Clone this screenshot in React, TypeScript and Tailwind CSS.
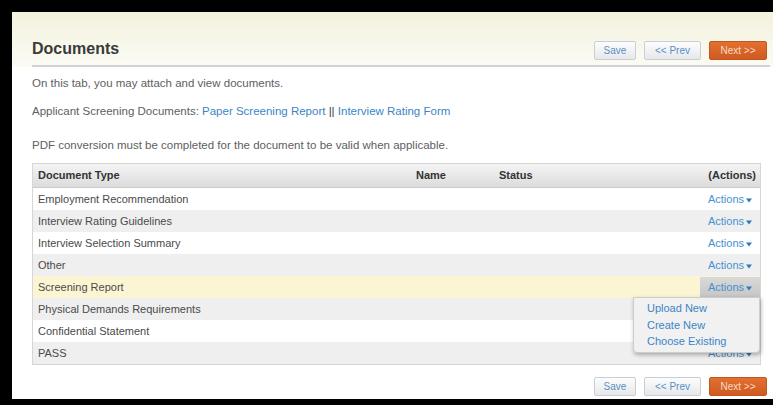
import React from "react";

const rows = [
  { name: "Employment Recommendation", tone: "white" },
  { name: "Interview Rating Guidelines", tone: "gray" },
  { name: "Interview Selection Summary", tone: "white" },
  { name: "Other", tone: "gray" },
  { name: "Screening Report", tone: "hover" },
  { name: "Physical Demands Requirements", tone: "gray" },
  { name: "Confidential Statement", tone: "white" },
  { name: "PASS", tone: "gray" },
];

function Caret() {
  return (
    <svg width="6" height="5" viewBox="0 0 6 5" className="ml-[2px] mt-[2px]">
      <path d="M0 0.5 L6 0.5 L3 4.5 Z" fill="#2f78bd" />
    </svg>
  );
}

function NavButtons() {
  return (
    <div className="flex items-center gap-[8px]">
      <button className="h-[19px] w-[42px] rounded-[2px] border border-[#c9ced4] bg-gradient-to-b from-[#fdfdfd] to-[#e6e8ea] text-[10px] text-[#5a8fc6] leading-none">
        Save
      </button>
      <button className="h-[19px] w-[57px] rounded-[2px] border border-[#c9ced4] bg-gradient-to-b from-[#fdfdfd] to-[#e6e8ea] text-[10px] text-[#5a8fc6] leading-none">
        &lt;&lt; Prev
      </button>
      <button className="h-[19px] w-[58px] rounded-[2px] border border-[#c2551f] bg-gradient-to-b from-[#e2702f] to-[#cf5a22] text-[10px] text-[#fbd9c2] leading-none">
        Next &gt;&gt;
      </button>
    </div>
  );
}

export default function App() {
  return (
    <div
      className="w-[773px] h-[405px] bg-black pt-[12px] pl-[12px] pb-[6px] overflow-hidden"
      style={{ fontFamily: '"Liberation Sans", Arial, sans-serif' }}
    >
      <div className="h-full bg-white flex flex-col">
        {/* page header */}
        <div className="bg-gradient-to-b from-[#f3f2dd] to-[#fbfbf5] pl-[20px] pr-[3px]">
          <div className="h-[55px] flex items-end justify-between border-b-2 border-[#d2d2d2] pb-[5px] pr-[3px]">
            <h1 className="text-[16px] leading-[18px] font-bold text-[#3a3a3a] mb-[2px]">Documents</h1>
            <NavButtons />
          </div>
        </div>

        <div className="pl-[20px] pr-[12px] flex flex-col">
          <p className="mt-[8px] text-[11.5px] leading-[16px] text-[#606060]">
            On this tab, you may attach and view documents.
          </p>
          <p className="mt-[12px] text-[11.5px] leading-[16px] text-[#606060]">
            Applicant Screening Documents:{" "}
            <a className="text-[#3b85c7]">Paper Screening Report</a>
            <span className="text-[#333]"> || </span>
            <a className="text-[#3b85c7]">Interview Rating Form</a>
          </p>
          <p className="mt-[18px] text-[11.5px] leading-[16px] text-[#606060]">
            PDF conversion must be completed for the document to be valid when applicable.
          </p>

          {/* documents table */}
          <div className="mt-[10px] border border-[#d6d6d6]">
            <div className="grid grid-cols-[378px_83px_1fr_120px] h-[24px] items-center bg-gradient-to-b from-[#f4f4f4] to-[#dcdcdc] border-b border-[#cccccc] text-[11px] font-bold text-[#333]">
              <div className="pl-[5px]">Document Type</div>
              <div className="pl-[5px]">Name</div>
              <div className="pl-[5px]">Status</div>
              <div className="pr-[4px] text-right">(Actions)</div>
            </div>
            {rows.map((r) => {
              const bg =
                r.tone === "hover"
                  ? "bg-[#fcf5d3]"
                  : r.tone === "gray"
                  ? "bg-[#efefef]"
                  : "bg-white";
              const open = r.tone === "hover";
              return (
                <div
                  key={r.name}
                  className={`grid grid-cols-[378px_83px_1fr_120px] h-[22px] items-center text-[11px] text-[#4a4a4a] ${bg}`}
                >
                  <div className="pl-[5px]">{r.name}</div>
                  <div />
                  <div />
                  <div className="relative flex justify-end h-full items-center">
                    <span
                      className={`h-[20px] px-[8px] flex items-center text-[#4592cf] ${
                        open ? "bg-gradient-to-b from-[#d9d9d9] to-[#c6c6c6]" : ""
                      }`}
                    >
                      Actions
                      <Caret />
                    </span>
                    {open && (
                      <div className="absolute right-0 top-[21px] z-10 w-[127px] h-[56px] bg-[#f1f1f1] border border-[#cdcdcd] rounded-b-[4px] shadow-[1px_2px_4px_rgba(0,0,0,0.3)] pt-[2px] pl-[13px] text-[11px] leading-[16.5px] text-[#3b85c7]">
                        <div>Upload New</div>
                        <div>Create New</div>
                        <div>Choose Existing</div>
                      </div>
                    )}
                  </div>
                </div>
              );
            })}
          </div>

          <div className="mt-[12px] flex justify-end mr-[-6px]">
            <NavButtons />
          </div>
        </div>
      </div>
    </div>
  );
}
